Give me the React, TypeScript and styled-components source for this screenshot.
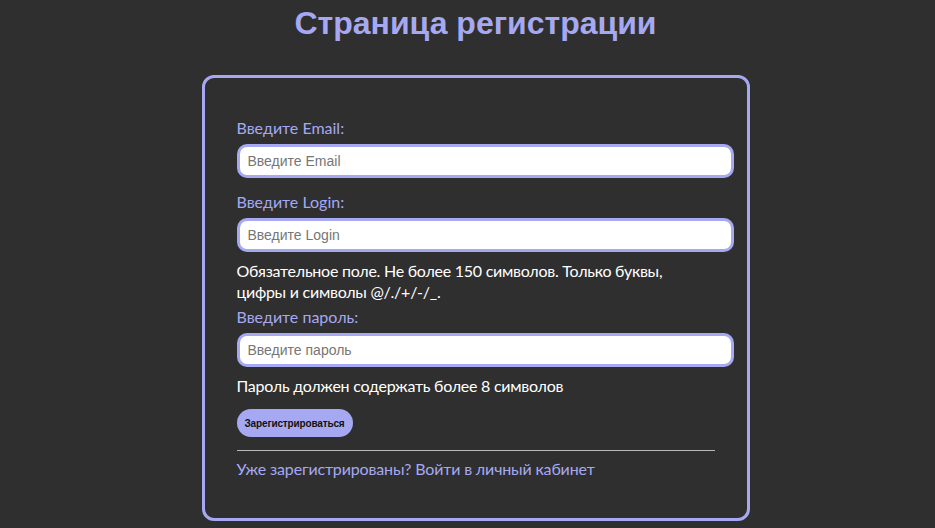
import React from "react";
import styled, { createGlobalStyle } from "styled-components";

const Global = createGlobalStyle`
  html, body { margin: 0; padding: 0; background: #2f2f2f; }
  body { font-family: Lato, "Noto Sans", sans-serif; }
  * { box-sizing: border-box; }
`;

const Page = styled.div`
  display: flex;
  flex-direction: column;
  align-items: center;
  min-height: 528px;
  padding-left: 16px;
  background: #2f2f2f;
`;

const Title = styled.h1`
  margin: 3px 0 0;
  font-family: "Liberation Sans", Arial, sans-serif;
  font-weight: 700;
  font-size: 32px;
  line-height: 40px;
  color: #a6a9f1;
`;

const Card = styled.form`
  margin-top: 32px;
  width: 548px;
  border: 3px solid #a6a9f1;
  border-radius: 12px;
  padding: 40px 13px 40px 32px;
  display: flex;
  flex-direction: column;
`;

const Label = styled.label<{ $mt?: number }>`
  font-size: 16px;
  line-height: 19px;
  color: #a6a9f1;
  margin-top: ${(p) => p.$mt ?? 0}px;
  margin-bottom: 7px;
`;

const Input = styled.input`
  width: 100%;
  height: 34px;
  border: 3px solid #a6a9f1;
  border-radius: 10px;
  background: #fff;
  padding: 0 8px;
  font-family: "Liberation Sans", Arial, sans-serif;
  font-size: 14px;
  color: #222;
  outline: none;
  &::placeholder { color: #767676; }
`;

const Help = styled.p`
  margin: 8px 0 0;
  max-width: 470px;
  font-size: 16px;
  line-height: 21px;
  letter-spacing: -0.25px;
  color: #ffffff;
`;

const Button = styled.button`
  align-self: flex-start;
  margin-top: 13px;
  height: 28px;
  padding: 0 8px;
  border: none;
  border-radius: 14px;
  background: #a6a9f1;
  color: #111;
  font-family: "Liberation Sans", Arial, sans-serif;
  font-weight: 700;
  font-size: 10px;
  letter-spacing: -0.15px;
`;

const Divider = styled.hr`
  margin: 13px 19px 0 0;
  border: none;
  border-top: 1px solid #b8b8b8;
`;

const Link = styled.a`
  margin-top: 8px;
  font-size: 16px;
  line-height: 19px;
  letter-spacing: -0.15px;
  color: #a6a9f1;
  text-decoration: none;
`;

export default function App() {
  return (
    <Page>
      <Global />
      <Title>Страница регистрации</Title>
      <Card onSubmit={(e) => e.preventDefault()}>
        <Label>Введите Email:</Label>
        <Input placeholder="Введите Email" />
        <Label $mt={14}>Введите Login:</Label>
        <Input placeholder="Введите Login" />
        <Help>
          Обязательное поле. Не более 150 символов. Только буквы, цифры и символы @/./+/-/_.
        </Help>
        <Label $mt={5}>Введите пароль:</Label>
        <Input type="password" placeholder="Введите пароль" />
        <Help>Пароль должен содержать более 8 символов</Help>
        <Button type="submit">Зарегистрироваться</Button>
        <Divider />
        <Link href="#">Уже зарегистрированы? Войти в личный кабинет</Link>
      </Card>
    </Page>
  );
}
